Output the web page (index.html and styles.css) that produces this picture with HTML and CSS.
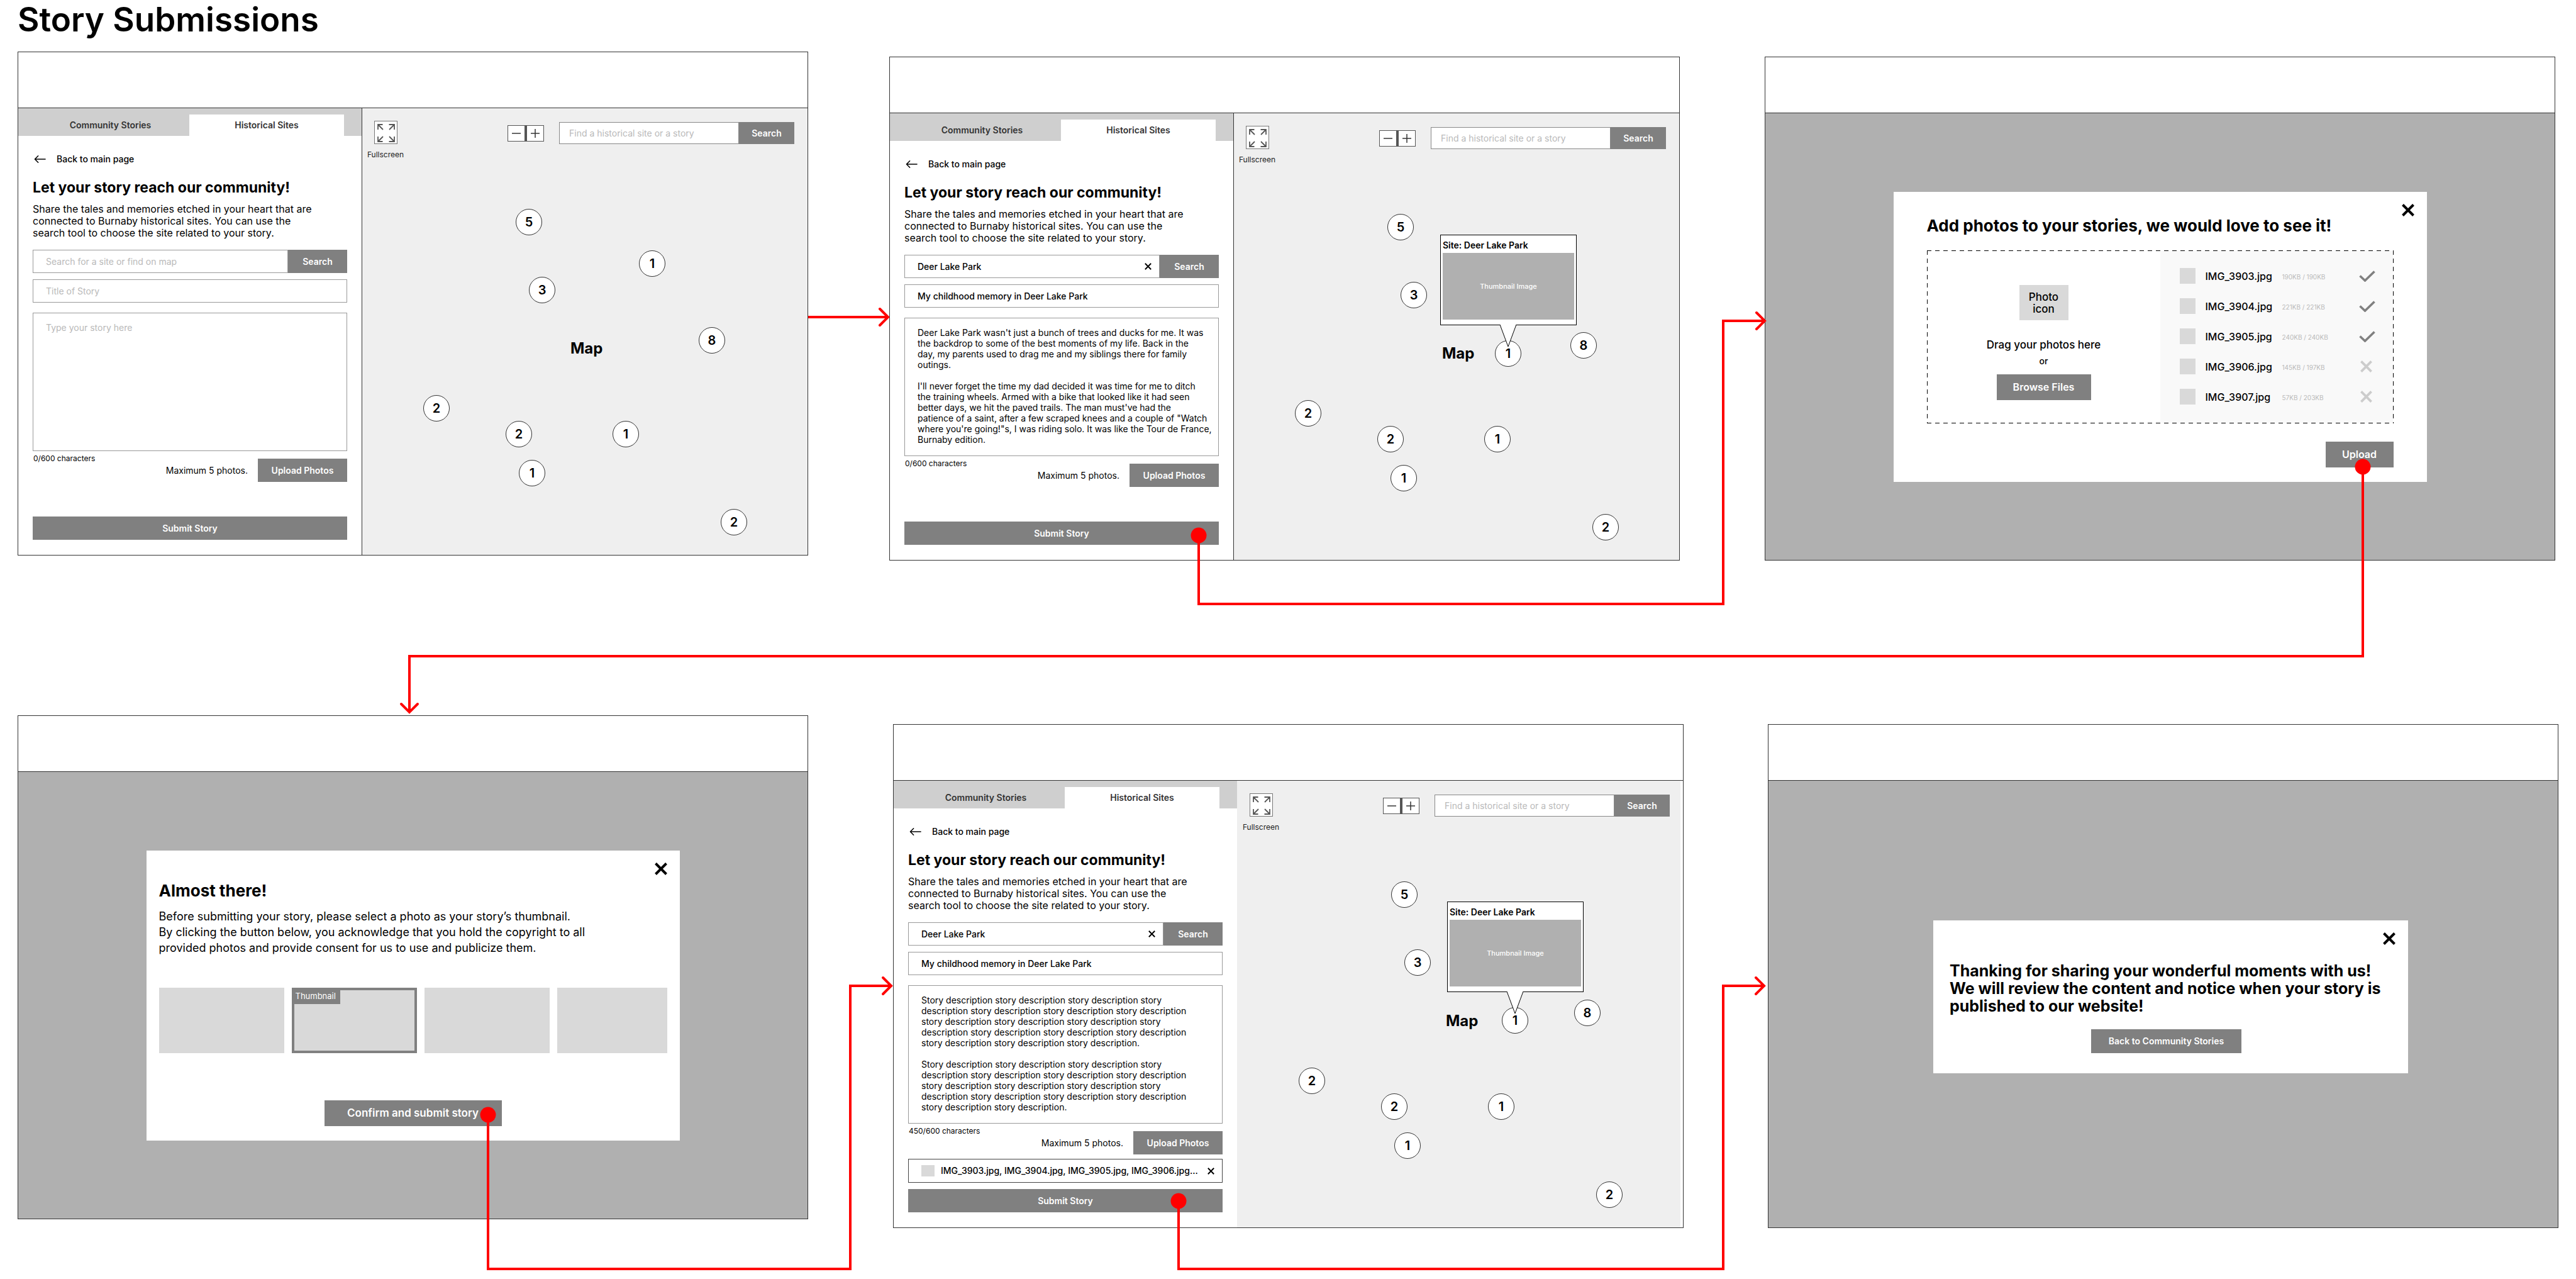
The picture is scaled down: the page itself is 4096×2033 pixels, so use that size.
FILE: index.html
```html
<!DOCTYPE html>
<html lang="en">
<head>
<meta charset="utf-8">
<title>Story Submissions</title>
<link rel="stylesheet" href="styles.css">
</head>
<body>
<svg class="defs" aria-hidden="true">
  <symbol id="i-back" viewBox="0 0 20 14"><path d="M1.500 7H19M7 1.500L1.500 7L7 12.500" fill="none" stroke="#000" stroke-width="1.600" stroke-linecap="round" stroke-linejoin="round"/></symbol>
  <symbol id="i-full" viewBox="0 0 35 35"><path d="M12.500 5H5v8M5 5l8 8M22.500 5H31v8M31 5l-8 8M12.500 32H5v-8M5 32l8-8M22.500 32H31v-8M31 32l-8-8" fill="none" stroke="#555" stroke-width="1.800"/></symbol>
  <symbol id="i-close" viewBox="0 0 20 20"><path d="M1.500 1.500l17 17M18.500 1.500l-17 17" fill="none" stroke="currentColor" stroke-width="4"/></symbol>
  <symbol id="i-clear" viewBox="0 0 20 20"><path d="M1.500 1.500l17 17M18.500 1.500l-17 17" fill="none" stroke="currentColor" stroke-width="3.600"/></symbol>
  <symbol id="i-check" viewBox="0 0 26 18"><path d="M1.500 8.500L9.500 16L24.500 1.500" fill="none" stroke="#808080" stroke-width="3.600"/></symbol>
</svg>

<main class="board">
  <h1 class="board-title">Story Submissions</h1>

  <div class="row row-top">
    <section class="frame frame-raised">
      <header class="frame-head"></header>
      <div class="split">
        <div class="panel">
          <nav class="tabs"><a class="tab" href="#">Community Stories</a><a class="tab tab-on" href="#">Historical Sites</a></nav>
          <form class="form">
            <a class="back" href="#"><svg class="ico-back"><use href="#i-back"/></svg>Back to main page</a>
            <h2 class="heading">Let your story reach our community!</h2>
            <p class="intro">Share the tales and memories etched in your heart that are<br>connected to Burnaby historical sites. You can use the<br>search tool to choose the site related to your story.</p>
            <div class="search">
              <div class="field"><input type="text" aria-label="Site" placeholder="Search for a site or find on map"></div>
              <button class="btn btn-search" type="button">Search</button>
            </div>
            <div class="field field-title"><input type="text" aria-label="Title" placeholder="Title of Story"></div>
            <textarea class="story" aria-label="Story" placeholder="Type your story here"></textarea>
            <div class="foot">
              <span class="count">0/600 characters</span>
              <div class="photos"><span>Maximum 5 photos.</span><button class="btn" type="button">Upload Photos</button></div>
            </div>
            <button class="btn btn-submit" type="button">Submit Story</button>
          </form>
        </div>
        <div class="map">
          <div class="map-bar">
            <div class="full"><button class="full-btn" type="button" aria-label="Fullscreen"><svg><use href="#i-full"/></svg></button><span>Fullscreen</span></div>
            <div class="zoom"><button type="button" aria-label="Zoom out"><svg viewBox="0 0 26 24"><path d="M6 12h14" stroke="#333" stroke-width="1.500"/></svg></button><button type="button" aria-label="Zoom in"><svg viewBox="0 0 26 24"><path d="M6 12h14M13 5v14" stroke="#333" stroke-width="1.500"/></svg></button></div>
            <div class="search map-search">
              <div class="field"><input type="text" aria-label="Find" placeholder="Find a historical site or a story"></div>
              <button class="btn btn-search" type="button">Search</button>
            </div>
          </div>
          <span class="map-name">Map</span>
          <span class="pin p1">5</span><span class="pin p2">1</span><span class="pin p3">3</span><span class="pin p4">8</span><span class="pin p5">2</span><span class="pin p6">2</span><span class="pin p7">1</span><span class="pin p8">1</span><span class="pin p9">2</span>
        </div>
      </div>
    </section>

    <section class="frame">
      <header class="frame-head"></header>
      <div class="split">
        <div class="panel">
          <nav class="tabs"><a class="tab" href="#">Community Stories</a><a class="tab tab-on" href="#">Historical Sites</a></nav>
          <form class="form">
            <a class="back" href="#"><svg class="ico-back"><use href="#i-back"/></svg>Back to main page</a>
            <h2 class="heading">Let your story reach our community!</h2>
            <p class="intro">Share the tales and memories etched in your heart that are<br>connected to Burnaby historical sites. You can use the<br>search tool to choose the site related to your story.</p>
            <div class="search">
              <div class="field"><input type="text" aria-label="Site" value="Deer Lake Park"><button class="clear" type="button" aria-label="Clear"><svg><use href="#i-clear"/></svg></button></div>
              <button class="btn btn-search" type="button">Search</button>
            </div>
            <div class="field field-title"><input type="text" aria-label="Title" value="My childhood memory in Deer Lake Park"></div>
            <textarea class="story" aria-label="Story">Deer Lake Park wasn't just a bunch of trees and ducks for me. It was
the backdrop to some of the best moments of my life. Back in the
day, my parents used to drag me and my siblings there for family
outings.

I'll never forget the time my dad decided it was time for me to ditch
the training wheels. Armed with a bike that looked like it had seen
better days, we hit the paved trails. The man must've had the
patience of a saint, after a few scraped knees and a couple of "Watch
where you're going!"s, I was riding solo. It was like the Tour de France,
Burnaby edition.</textarea>
            <div class="foot">
              <span class="count">0/600 characters</span>
              <div class="photos"><span>Maximum 5 photos.</span><button class="btn" type="button">Upload Photos</button></div>
            </div>
            <button class="btn btn-submit" type="button">Submit Story</button>
          </form>
        </div>
        <div class="map">
          <div class="map-bar">
            <div class="full"><button class="full-btn" type="button" aria-label="Fullscreen"><svg><use href="#i-full"/></svg></button><span>Fullscreen</span></div>
            <div class="zoom"><button type="button" aria-label="Zoom out"><svg viewBox="0 0 26 24"><path d="M6 12h14" stroke="#333" stroke-width="1.500"/></svg></button><button type="button" aria-label="Zoom in"><svg viewBox="0 0 26 24"><path d="M6 12h14M13 5v14" stroke="#333" stroke-width="1.500"/></svg></button></div>
            <div class="search map-search">
              <div class="field"><input type="text" aria-label="Find" placeholder="Find a historical site or a story"></div>
              <button class="btn btn-search" type="button">Search</button>
            </div>
          </div>
          <span class="map-name">Map</span>
          <span class="pin p1">5</span><span class="pin p3">3</span><span class="pin p4">8</span><span class="pin p5">2</span><span class="pin p6">2</span><span class="pin p7">1</span><span class="pin p8">1</span><span class="pin p9">2</span>
          <div class="callout">
            <span class="pin pin-site">1</span>
            <div class="popup"><strong>Site: Deer Lake Park</strong><div class="thumb-image">Thumbnail Image</div></div>
            <svg class="tail" viewBox="0 0 28 36"><path d="M1 0L14 35L27 0" fill="#fff" stroke="#000"/></svg>
          </div>
        </div>
      </div>
    </section>

    <section class="frame">
      <header class="frame-head"></header>
      <div class="stage">
        <div class="modal modal-upload">
          <button class="close" type="button" aria-label="Close"><svg><use href="#i-close"/></svg></button>
          <h2 class="modal-title">Add photos to your stories, we would love to see it!</h2>
          <div class="drop">
            <div class="drop-left">
              <div class="photo-icon">Photo<br>icon</div>
              <span class="drag">Drag your photos here</span>
              <span class="or">or</span>
              <button class="btn btn-large" type="button">Browse Files</button>
            </div>
            <ul class="files">
              <li><i class="swatch"></i><span class="name">IMG_3903.jpg</span><span class="size">190KB / 190KB</span><svg class="ok"><use href="#i-check"/></svg></li>
              <li><i class="swatch"></i><span class="name">IMG_3904.jpg</span><span class="size">221KB / 221KB</span><svg class="ok"><use href="#i-check"/></svg></li>
              <li><i class="swatch"></i><span class="name">IMG_3905.jpg</span><span class="size">240KB / 240KB</span><svg class="ok"><use href="#i-check"/></svg></li>
              <li><i class="swatch"></i><span class="name">IMG_3906.jpg</span><span class="size">145KB / 197KB</span><svg class="no"><use href="#i-close"/></svg></li>
              <li><i class="swatch"></i><span class="name">IMG_3907.jpg</span><span class="size">57KB / 203KB</span><svg class="no"><use href="#i-close"/></svg></li>
            </ul>
          </div>
          <button class="btn btn-large btn-upload" type="button">Upload</button>
        </div>
      </div>
    </section>
  </div>

  <div class="row row-bottom">
    <section class="frame frame-raised">
      <header class="frame-head"></header>
      <div class="stage">
        <div class="modal modal-pick">
          <button class="close" type="button" aria-label="Close"><svg><use href="#i-close"/></svg></button>
          <h2 class="modal-title">Almost there!</h2>
          <p class="modal-text">Before submitting your story, please select a photo as your story’s thumbnail.<br>By clicking the button below, you acknowledge that you hold the copyright to all<br>provided photos and provide consent for us to use and publicize them.</p>
          <div class="thumbs"><div class="thumb"></div><div class="thumb thumb-on"><span>Thumbnail</span></div><div class="thumb"></div><div class="thumb thumb-cut"></div></div>
          <button class="btn btn-large btn-confirm" type="button">Confirm and submit story</button>
        </div>
      </div>
    </section>

    <section class="frame frame-borderless">
      <header class="frame-head"></header>
      <div class="split">
        <div class="panel">
          <nav class="tabs"><a class="tab" href="#">Community Stories</a><a class="tab tab-on" href="#">Historical Sites</a></nav>
          <form class="form">
            <a class="back" href="#"><svg class="ico-back"><use href="#i-back"/></svg>Back to main page</a>
            <h2 class="heading">Let your story reach our community!</h2>
            <p class="intro">Share the tales and memories etched in your heart that are<br>connected to Burnaby historical sites. You can use the<br>search tool to choose the site related to your story.</p>
            <div class="search">
              <div class="field"><input type="text" aria-label="Site" value="Deer Lake Park"><button class="clear" type="button" aria-label="Clear"><svg><use href="#i-clear"/></svg></button></div>
              <button class="btn btn-search" type="button">Search</button>
            </div>
            <div class="field field-title"><input type="text" aria-label="Title" value="My childhood memory in Deer Lake Park"></div>
            <textarea class="story" aria-label="Story">Story description story description story description story
description story description story description story description
story description story description story description story
description story description story description story description
story description story description story description.

Story description story description story description story
description story description story description story description
story description story description story description story
description story description story description story description
story description story description.</textarea>
            <div class="foot">
              <span class="count">450/600 characters</span>
              <div class="photos"><span>Maximum 5 photos.</span><button class="btn" type="button">Upload Photos</button></div>
            </div>
            <div class="chosen"><i class="swatch"></i><span>IMG_3903.jpg, IMG_3904.jpg, IMG_3905.jpg, IMG_3906.jpg...</span><button class="clear" type="button" aria-label="Remove"><svg><use href="#i-clear"/></svg></button></div>
            <button class="btn btn-submit" type="button">Submit Story</button>
          </form>
        </div>
        <div class="map">
          <div class="map-bar">
            <div class="full"><button class="full-btn" type="button" aria-label="Fullscreen"><svg><use href="#i-full"/></svg></button><span>Fullscreen</span></div>
            <div class="zoom"><button type="button" aria-label="Zoom out"><svg viewBox="0 0 26 24"><path d="M6 12h14" stroke="#333" stroke-width="1.500"/></svg></button><button type="button" aria-label="Zoom in"><svg viewBox="0 0 26 24"><path d="M6 12h14M13 5v14" stroke="#333" stroke-width="1.500"/></svg></button></div>
            <div class="search map-search">
              <div class="field"><input type="text" aria-label="Find" placeholder="Find a historical site or a story"></div>
              <button class="btn btn-search" type="button">Search</button>
            </div>
          </div>
          <span class="map-name">Map</span>
          <span class="pin p1">5</span><span class="pin p3">3</span><span class="pin p4">8</span><span class="pin p5">2</span><span class="pin p6">2</span><span class="pin p7">1</span><span class="pin p8">1</span><span class="pin p9">2</span>
          <div class="callout callout-east">
            <span class="pin pin-site">1</span>
            <div class="popup"><strong>Site: Deer Lake Park</strong><div class="thumb-image">Thumbnail Image</div></div>
            <svg class="tail" viewBox="0 0 28 36"><path d="M1 0L14 35L27 0" fill="#fff" stroke="#000"/></svg>
          </div>
        </div>
      </div>
    </section>

    <section class="frame">
      <header class="frame-head"></header>
      <div class="stage stage-thanks">
        <div class="modal modal-thanks">
          <button class="close" type="button" aria-label="Close"><svg><use href="#i-close"/></svg></button>
          <h2 class="modal-title">Thanking for sharing your wonderful moments with us!<br>We will review the content and notice when your story is<br>published to our website!</h2>
          <button class="btn btn-home" type="button">Back to Community Stories</button>
        </div>
      </div>
    </section>
  </div>

  <svg class="flow" viewBox="0 0 4096 2033" preserveAspectRatio="none" aria-hidden="true">
    <g fill="none" stroke="#f00" stroke-width="4">
      <path d="M1285 504H1412"/>
      <path d="M1906 851V960H2740V510H2806"/>
      <path d="M3757 742V1043H651V1132"/>
      <path d="M776 1772V2017H1352V1567H1417"/>
      <path d="M1874 1909V2017H2740V1567H2805"/>
      <g stroke-linecap="round">
        <path d="M1399 491L1412 504L1399 517"/>
        <path d="M2793 497L2806 510L2793 523"/>
        <path d="M638 1119L651 1132L664 1119"/>
        <path d="M1404 1554L1417 1567L1404 1580"/>
        <path d="M2792 1554L2805 1567L2792 1580"/>
      </g>
    </g>
    <g fill="#f00"><circle cx="1906" cy="851" r="12.500"/><circle cx="3757" cy="742" r="12.500"/><circle cx="776" cy="1772" r="12.500"/><circle cx="1874" cy="1909" r="12.500"/></g>
  </svg>
</main>
</body>
</html>
```
FILE: styles.css
```css
* { box-sizing: border-box; }

body {
  margin: 0;
  background: #fff;
  color: #000;
  font: 500 14px/20px Inter, "Liberation Sans", sans-serif;
}

h1, h2, p, ul { margin: 0; padding: 0; }
ul { list-style: none; }
a { color: inherit; text-decoration: none; }
button, input, textarea { font: inherit; color: inherit; border: 0; border-radius: 0; padding: 0; margin: 0; background: none; outline: 0; }
svg { display: block; }
.defs { display: none; }

.board { position: relative; padding-bottom: 81px; }
.board-title { padding-left: 28px; margin-bottom: 20px; font-size: 53px; line-height: 62px; font-weight: 600; }

.row { display: grid; }
.row-top { grid-template-columns: 1fr 129px 1fr 135px 1fr; padding: 0 33px 0 28px; margin-bottom: 246px; }
.row-bottom { grid-template-columns: 1fr 135px 1fr 134px 1fr; padding: 0 28px; }
.frame { display: flex; flex-direction: column; min-height: 801px; border: 1px solid #333; background: #fff; }
.frame:nth-child(2) { grid-column: 3; }
.frame:nth-child(3) { grid-column: 5; }
.row-top .frame { margin-top: 8px; }
.row-top .frame-raised { margin: 0 0 8px; }
.row-bottom .frame { margin-top: 14px; }
.row-bottom .frame-raised { margin: 0 0 14px; }
.frame-head { height: 89px; border-bottom: 1px solid #333; }

.split { flex: 1; display: grid; grid-template-columns: 547fr 708fr; }
.panel { display: flex; flex-direction: column; border-right: 1px solid #333; min-width: 0; }
.frame-borderless .panel { border-right-color: #efefef; }

.tabs { display: flex; height: 44px; padding: 10px 28px 0 21px; background: #cfcfcf; color: #333; font-weight: 600; }
.tab { flex: 1; display: flex; align-items: center; justify-content: center; }
.tab-on { background: #fff; flex: 0 0 246px; }

.form { flex: 1; display: flex; flex-direction: column; padding: 27px 23px 24px; }
.back { display: flex; align-items: center; gap: 17px; padding-left: 2px; }
.ico-back { width: 19px; height: 14px; }
.heading { margin-top: 21px; font-size: 23px; line-height: 28px; font-weight: 700; white-space: nowrap; }
.intro { margin: 11px 0 17px; font-size: 16px; line-height: 19px; font-weight: 400; white-space: nowrap; }

.search { display: flex; height: 37px; }
.field { flex: 1; display: flex; align-items: center; border: 1px solid #999; background: #fff; padding-left: 20px; min-width: 0; }
.field input { flex: 1; min-width: 0; height: 100%; }
::placeholder { color: #b9b9b9; opacity: 1; font-weight: 400; }
.field-title { flex: none; height: 37px; margin: 10px 0 16px; }
.clear { display: flex; width: 36px; height: 34px; align-items: center; justify-content: center; }
.clear svg { width: 11px; height: 11px; }
.story { display: block; height: 220px; border: 1px solid #999; padding: 14px 4px 14px 20px; font-size: 14px; line-height: 17px; font-weight: 400; resize: none; overflow: hidden; }

.btn { background: #808080; color: #fff; font-weight: 600; text-align: center; white-space: nowrap; }
.btn-search { width: 94px; }
.foot { display: flex; justify-content: space-between; align-items: flex-start; }
.count { margin-top: 4px; padding-left: 1px; font-size: 12px; line-height: 16px; font-weight: 400; }
.photos { display: flex; align-items: center; gap: 16px; margin-top: 12px; font-weight: 400; }
.photos .btn { width: 142px; height: 37px; }
.chosen { display: flex; align-items: center; height: 38px; margin-top: 7px; padding-left: 20px; border: 1px solid #444; }
.chosen span { flex: 1; white-space: nowrap; }
.chosen .swatch { width: 21px; height: 18px; margin-right: 10px; }
.swatch { background: #d9d9d9; }
.btn-submit { height: 37px; margin-top: auto; }

.map { position: relative; background: #efefef; }
.frame-borderless .map { box-shadow: inset -4px 0 #fff; }
.map-bar { display: flex; align-items: flex-start; padding: 20px 21px 0 9px; }
.full { display: flex; flex-direction: column; align-items: center; gap: 9px; width: 56px; font-size: 12px; line-height: 16px; font-weight: 400; color: #222; }
.full-btn { width: 37px; height: 37px; border: 1px solid #777; background: #fff; }
.full-btn svg { width: 35px; height: 35px; }
.zoom { display: flex; gap: 4px; padding: 1px; margin: 7px 24px 0 auto; background: #555; }
.zoom button { width: 26px; height: 24px; background: #fff; }
.zoom svg { width: 26px; height: 24px; }
.map-search { width: 374px; height: 35px; margin-top: 2px; }
.map-search .field { padding-left: 15px; border-color: #888; }
.map-search .btn { width: 88px; }

/* Markers sit at their map coordinates. */
.pin { position: absolute; display: flex; align-items: center; justify-content: center; width: 42px; height: 42px; border: 1px solid #333; border-radius: 50%; background: #fff; font-size: 20px; font-weight: 600; }
.p1 { left: 244px; top: 160px; }
.p2 { left: 440px; top: 226px; }
.p3 { left: 265px; top: 268px; }
.p4 { left: 535px; top: 348px; }
.p5 { left: 97px; top: 456px; }
.p6 { left: 228px; top: 497px; }
.p7 { left: 398px; top: 497px; }
.p8 { left: 249px; top: 559px; }
.p9 { left: 570px; top: 637px; }
.map-name { position: absolute; left: 331px; top: 368px; font-size: 24px; line-height: 28px; font-weight: 700; }

.callout { position: absolute; left: 328px; top: 193px; width: 217px; }
.callout-east { left: 333px; top: 192px; }
.pin-site { left: 87px; top: 168px; }
.popup { position: relative; height: 144px; padding: 4px 3px; border: 1px solid #000; background: #fff; }
.popup strong { display: block; font-weight: 600; line-height: 24px; white-space: nowrap; }
.thumb-image { display: flex; align-items: center; justify-content: center; height: 106px; background: #b0b0b0; color: #fff; font-size: 11px; }
.tail { position: absolute; left: 94px; top: 143px; width: 28px; height: 36px; }

.stage { flex: 1; display: grid; place-content: center; background: #b0b0b0; }
.stage-thanks { padding: 0 0 24px 24px; }
.modal { position: relative; display: flex; flex-direction: column; background: #fff; }
.modal-title { font-size: 26px; line-height: 28px; font-weight: 700; white-space: nowrap; }
.close { position: absolute; right: 20px; top: 19px; width: 20px; height: 20px; }
.close svg { width: 20px; height: 20px; }
.btn-large { height: 41px; font-size: 16px; }

.modal-upload { width: 848px; padding: 40px 53px 23px; }
.drop {
  display: grid; grid-template-columns: 1fr 1fr; height: 275px; margin: 25px 0 29px; padding: 1px;
  background:
    repeating-linear-gradient(90deg, #000 0 7px, transparent 7px 13px) 0 0 / 100% 1px no-repeat,
    repeating-linear-gradient(90deg, #000 0 7px, transparent 7px 13px) 0 100% / 100% 1px no-repeat,
    repeating-linear-gradient(#000 0 7px, transparent 7px 13px) 0 0 / 1px 100% no-repeat,
    repeating-linear-gradient(#000 0 7px, transparent 7px 13px) 100% 0 / 1px 100% no-repeat;
}
.drop-left { display: flex; flex-direction: column; align-items: center; padding-top: 54px; font-size: 17px; }
.photo-icon { width: 78px; height: 56px; padding-top: 10px; background: #d9d9d9; line-height: 19px; text-align: center; }
.drag { margin: 29px 0 7px; }
.or { font-size: 14px; line-height: 18px; margin-bottom: 12px; }
.drop-left .btn { width: 150px; }
.files { padding: 16px 28px 0 31px; background: #f9f9f9; }
.files li { display: flex; align-items: center; height: 48px; font-size: 16px; }
.files .swatch { width: 25px; height: 25px; margin-right: 16px; }
.files .name { width: 122px; }
.files .size { flex: 1; padding-top: 3px; font-size: 10px; font-weight: 400; color: #b9b9b9; }
.ok { width: 26px; height: 18px; }
.no { width: 19px; height: 19px; margin-right: 5px; color: #ccc; }
.btn-upload { width: 108px; align-self: flex-end; }

.modal-pick { width: 848px; padding: 50px 20px 23px; }
.modal-text { margin: 14px 0 51px; font-size: 18px; line-height: 25px; font-weight: 400; white-space: nowrap; }
.thumbs { display: flex; gap: 12px; margin-bottom: 75px; }
.thumb { flex: 0 0 199px; height: 104px; background: #d9d9d9; }
.thumb-cut { flex: 1; }
.thumb-on { border: 4px solid #808080; }
.thumb-on span { display: block; width: 73px; height: 22px; padding-left: 2px; background: #808080; color: #fff; font-size: 13px; line-height: 18px; font-weight: 400; }
.btn-confirm { width: 282px; align-self: center; font-size: 17px; }

.modal-thanks { width: 755px; padding: 66px 26px 32px; }
.modal-thanks .modal-title { font-size: 25px; }
.modal-thanks .btn { width: 239px; height: 38px; margin: 23px 0 0 225px; }

.flow { position: absolute; left: 0; top: 0; width: 100%; height: 100%; pointer-events: none; }
```
